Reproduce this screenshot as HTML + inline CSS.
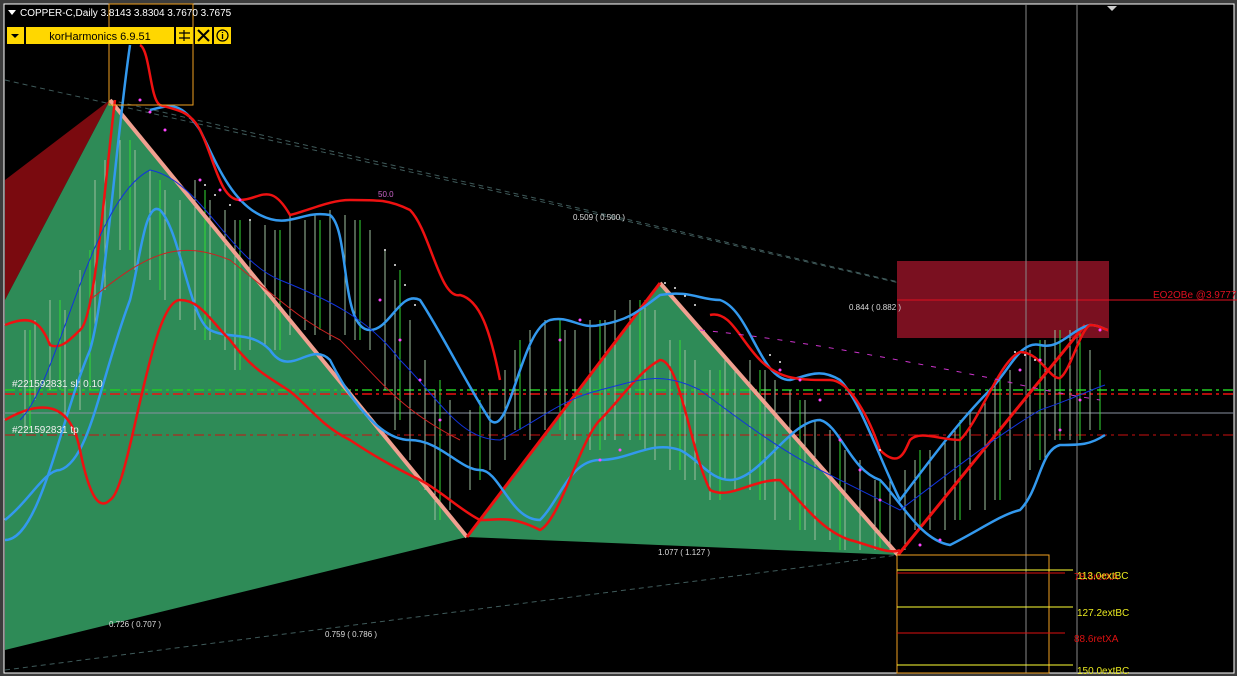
<!DOCTYPE html>
<html><head><meta charset="utf-8"><style>
html,body{margin:0;padding:0;background:#3c3c3c;width:1237px;height:676px;overflow:hidden}
svg{position:absolute;left:0;top:0}
text{font-family:"Liberation Sans",sans-serif}
</style></head><body>
<svg width="1237" height="676" viewBox="0 0 1237 676">
<rect x="0" y="0" width="1237" height="676" fill="#3c3c3c"/>
<rect x="4" y="4" width="1230" height="669" fill="#000" stroke="#fff" stroke-width="1"/>
<g stroke="#3f5a5a" stroke-width="1" stroke-dasharray="5,4" fill="none">
<line x1="5" y1="80" x2="1085" y2="325"/>
<line x1="110" y1="100" x2="1085" y2="325"/>
<line x1="5" y1="670" x2="898" y2="555"/>
</g>
<polygon points="5,180 110,100 5,300" fill="#7a0a0f"/>
<polygon points="5,300 110,100 467,537 5,650" fill="#2e8b57"/>
<polygon points="467,537 660,283 898,555" fill="#2e8b57"/>
<rect x="897" y="261" width="212" height="77" fill="#7a1020"/>
<line x1="897" y1="300" x2="1237" y2="300" stroke="#e01020" stroke-width="1"/>
<text x="1153" y="298" fill="#e01020" font-size="10">EO2OBe   @3.9777</text>
<line x1="1026" y1="4" x2="1026" y2="673" stroke="#888" stroke-width="1"/>
<line x1="1077" y1="4" x2="1077" y2="673" stroke="#888" stroke-width="1"/>
<line x1="5" y1="390" x2="1234" y2="390" stroke="#22cc22" stroke-width="1.5" stroke-dasharray="10,4,3,4"/>
<line x1="5" y1="394" x2="1234" y2="394" stroke="#ee1111" stroke-width="1.5" stroke-dasharray="10,4,3,4"/>
<line x1="5" y1="413" x2="1234" y2="413" stroke="#8890a0" stroke-width="1"/>
<line x1="5" y1="435" x2="1234" y2="435" stroke="#cc1111" stroke-width="1" stroke-dasharray="10,4,3,4"/>
<g stroke="#9fbf9f" stroke-width="1">
<path d="M25 330v100M35 320v80M50 300v90M65 310v110M80 270v140M95 180v150M105 160v130M120 140v110M135 150v120M150 170v110M165 190v110M180 200v120M195 180v150M210 200v140M225 210v140M235 220v150M250 220v130M265 225v120M275 230v120M290 215v120M305 220v110M315 215v120M330 210v130M345 215v120M355 220v120M370 230v120M385 250v140M395 280v150M410 320v140M425 360v130M435 390v130M450 400v110M470 410v80M490 390v80M505 370v90M515 350v80M530 330v110M545 320v110M565 330v110M575 330v110M590 320v130M605 320v120M615 310v130M630 300v140M645 300v150M655 310v150M670 340v130M685 350v130M695 360v120M710 370v130M725 360v120M735 370v120M750 360v130M765 370v130M775 380v140M790 390v130M805 400v130M815 420v120M830 430v110M845 450v100M860 460v90M875 480v70M890 480v70M905 470v80M915 460v70M930 450v80M945 440v90M955 430v90M970 410v100M985 400v110M995 380v120M1010 370v110M1030 350v120M1045 340v120M1055 330v110M1070 330v110M1090 350v80M1100 370v40"/>
</g>
<g stroke="#33dd33" stroke-width="1">
<path d="M30 330v100M60 300v90M90 250v140M130 140v110M160 180v110M205 190v150M240 220v150M280 230v120M320 220v110M360 220v120M400 270v150M440 380v140M480 400v80M520 340v90M560 320v110M600 320v130M640 300v140M680 340v130M720 370v130M760 370v130M800 400v130M840 440v110M880 480v70M920 450v80M960 420v100M1000 380v120M1040 340v120M1060 330v110M1080 330v110M1100 370v60"/>
</g>
<line x1="110" y1="100" x2="467" y2="537" stroke="#f0a090" stroke-width="4"/>
<line x1="660" y1="283" x2="898" y2="555" stroke="#f0a090" stroke-width="4"/>
<line x1="467" y1="537" x2="660" y2="283" stroke="#ee1111" stroke-width="3"/>
<line x1="898" y1="555" x2="1085" y2="325" stroke="#ee1111" stroke-width="3"/>
<path d="M5 540 C40 540 60 420 90 350 C105 300 115 150 130 45 M150 110 C170 105 180 100 200 130 C215 160 230 200 260 215 C290 230 300 210 330 215 C350 230 340 330 370 330 C390 330 400 290 420 300 C440 330 470 390 490 420 C510 440 520 330 550 320 C570 315 580 330 600 325 C630 320 640 310 660 295 C690 290 700 300 720 300 C750 310 760 380 790 380 C810 375 820 368 840 380 C860 400 880 460 900 500 C930 460 960 420 990 390 C1010 370 1020 340 1040 345 C1060 350 1070 330 1090 325 C1100 325 1105 330 1108 330" stroke="#3399ee" stroke-width="2.5" fill="none"/>
<path d="M5 520 C30 500 45 470 60 470 C90 460 100 380 130 300 C140 260 145 200 160 210 C180 230 190 320 210 330 C230 340 250 330 270 350 C290 380 310 340 330 360 C350 400 380 440 410 440 C440 440 460 470 480 470 C500 470 510 520 540 520 C560 500 570 460 600 460 C630 460 650 440 680 450 C700 460 710 480 730 480 C760 480 790 420 820 420 C840 425 850 470 880 480 C900 500 920 540 950 545 C980 530 1000 515 1020 510 C1040 490 1040 450 1060 445 C1080 445 1090 445 1105 435" stroke="#3399ee" stroke-width="2.5" fill="none"/>
<path d="M5 325 C30 315 40 320 50 345 C60 350 70 340 80 330 C95 320 105 180 115 100 M140 45 C150 50 150 100 160 105 C175 110 190 110 200 130 C215 160 220 200 240 200 C260 200 270 180 290 215 C310 210 330 200 350 200 C380 200 390 200 410 210 C430 230 440 300 460 295 C480 300 490 330 500 380" stroke="#ee1111" stroke-width="2.5" fill="none"/>
<path d="M5 420 C40 400 70 400 80 450 C90 500 100 510 110 500 C130 490 150 300 180 300 C200 300 210 320 230 340 C260 380 280 380 300 400 C320 420 330 430 350 440 C380 460 400 470 420 480 C440 490 460 510 480 520 C500 520 510 515 540 530 C560 520 580 440 600 420 C620 400 640 370 660 360 C680 360 690 450 710 490 C730 500 750 480 780 480 C800 500 820 530 850 540 C870 545 890 555 900 550" stroke="#ee1111" stroke-width="2.5" fill="none"/>
<path d="M710 315 C730 310 740 340 760 360 C780 380 800 380 830 380 C850 380 870 420 880 450 C900 470 905 450 910 440 C920 430 940 440 960 440 C980 420 1000 360 1020 352 C1040 352 1050 380 1060 378 C1070 372 1080 330 1090 325 C1100 325 1105 330 1108 330" stroke="#ee1111" stroke-width="2.5" fill="none"/>
<path d="M20 420 C60 380 90 200 150 170 C200 180 230 260 280 280 C330 300 370 320 400 360 C440 400 460 440 500 440 C540 420 560 400 600 390 C640 380 660 370 700 390 C740 420 780 450 820 470 C860 490 880 500 900 510 C940 480 990 440 1040 410 C1070 400 1090 390 1105 385" stroke="#1133dd" stroke-width="1" fill="none"/>
<path d="M90 300 C150 250 180 240 230 260 C280 300 300 320 340 340 C380 380 400 410 460 440" stroke="#cc2222" stroke-width="1" fill="none"/>
<g fill="#ff44ff">
<circle cx="140" cy="100" r="1.5"/><circle cx="150" cy="112" r="1.5"/><circle cx="165" cy="130" r="1.5"/><circle cx="200" cy="180" r="1.5"/><circle cx="220" cy="190" r="1.5"/><circle cx="240" cy="200" r="1.5"/><circle cx="380" cy="300" r="1.5"/><circle cx="400" cy="340" r="1.5"/><circle cx="420" cy="380" r="1.5"/><circle cx="440" cy="420" r="1.5"/><circle cx="560" cy="340" r="1.5"/><circle cx="580" cy="320" r="1.5"/><circle cx="600" cy="460" r="1.5"/><circle cx="620" cy="450" r="1.5"/><circle cx="780" cy="370" r="1.5"/><circle cx="800" cy="380" r="1.5"/><circle cx="820" cy="400" r="1.5"/><circle cx="840" cy="440" r="1.5"/><circle cx="860" cy="470" r="1.5"/><circle cx="880" cy="500" r="1.5"/><circle cx="920" cy="545" r="1.5"/><circle cx="940" cy="540" r="1.5"/><circle cx="1020" cy="370" r="1.5"/><circle cx="1040" cy="360" r="1.5"/><circle cx="1060" cy="430" r="1.5"/><circle cx="1080" cy="400" r="1.5"/><circle cx="1100" cy="330" r="1.5"/>
</g>
<g fill="#eee">
<circle cx="205" cy="185" r="1"/><circle cx="215" cy="195" r="1"/><circle cx="230" cy="205" r="1"/><circle cx="250" cy="220" r="1"/><circle cx="385" cy="250" r="1"/><circle cx="395" cy="265" r="1"/><circle cx="405" cy="285" r="1"/><circle cx="415" cy="305" r="1"/><circle cx="665" cy="283" r="1"/><circle cx="675" cy="288" r="1"/><circle cx="685" cy="296" r="1"/><circle cx="695" cy="305" r="1"/><circle cx="770" cy="355" r="1"/><circle cx="780" cy="362" r="1"/><circle cx="880" cy="450" r="1"/><circle cx="1015" cy="352" r="1"/><circle cx="1025" cy="355" r="1"/><circle cx="1035" cy="360" r="1"/>
</g>
<path d="M700 330 C800 340 900 360 1000 380 C1040 390 1070 395 1100 400" stroke="#cc33cc" stroke-width="1" stroke-dasharray="5,8" fill="none"/>
<rect x="897" y="555" width="152" height="118" fill="none" stroke="#f0a020" stroke-width="1"/>
<line x1="897" y1="570" x2="1073" y2="570" stroke="#ffff33" stroke-width="1"/>
<line x1="897" y1="573" x2="1065" y2="573" stroke="#dd1111" stroke-width="1"/>
<line x1="897" y1="607" x2="1073" y2="607" stroke="#ffff33" stroke-width="1"/>
<line x1="897" y1="633" x2="1065" y2="633" stroke="#dd1111" stroke-width="1"/>
<line x1="897" y1="665" x2="1073" y2="665" stroke="#ffff33" stroke-width="1"/>
<g font-size="10">
<text x="1074" y="580" fill="#dd1111">78.6retXA</text>
<text x="1077" y="579" fill="#e8e820">113.0extBC</text>
<text x="1077" y="616" fill="#e8e820">127.2extBC</text>
<text x="1074" y="642" fill="#dd1111">88.6retXA</text>
<text x="1077" y="674" fill="#e8e820">150.0extBC</text>
</g>
<rect x="109" y="4" width="84" height="101" fill="none" stroke="#f0a020" stroke-width="1"/>
<g font-size="8" fill="#ddd">
<text x="573" y="220">0.509 ( 0.500 )</text>
<text x="849" y="310">0.844 ( 0.882 )</text>
<text x="658" y="555">1.077 ( 1.127 )</text>
<text x="109" y="627">0.726 ( 0.707 )</text>
<text x="325" y="637">0.759 ( 0.786 )</text>
<text x="378" y="197" fill="#cc66cc">50.0</text>
</g>
<g font-size="10" fill="#eee">
<text x="12" y="387">#221592831 sl: 0.10</text>
<text x="12" y="433">#221592831 tp</text>
</g>
<polygon points="8,10 16,10 12,15" fill="#fff"/>
<text x="20" y="16" fill="#fff" font-size="10">COPPER-C,Daily  3.8143 3.8304 3.7670 3.7675</text>
<polygon points="1107,6 1117,6 1112,11" fill="#ccc"/>
<rect x="7" y="27" width="17" height="17" fill="#ffd700"/>
<polygon points="11,34 19,34 15,38" fill="#000"/>
<rect x="26" y="27" width="148" height="17" fill="#ffd700"/>
<text x="100" y="40" fill="#000" font-size="11" text-anchor="middle">korHarmonics 6.9.51</text>
<rect x="176" y="27" width="17" height="17" fill="#ffd700"/>
<path d="M179 33h11M179 38h11M184 30v11" stroke="#000" stroke-width="1.2"/>
<rect x="195" y="27" width="17" height="17" fill="#ffd700"/>
<path d="M198 30l11 11M209 30l-11 11" stroke="#000" stroke-width="2"/>
<rect x="214" y="27" width="17" height="17" fill="#ffd700"/>
<circle cx="222.5" cy="35.5" r="5.5" fill="none" stroke="#000" stroke-width="1.2"/>
<path d="M222.5 34v5M222.5 32v1" stroke="#000" stroke-width="1.3"/>
</svg>
</body></html>
